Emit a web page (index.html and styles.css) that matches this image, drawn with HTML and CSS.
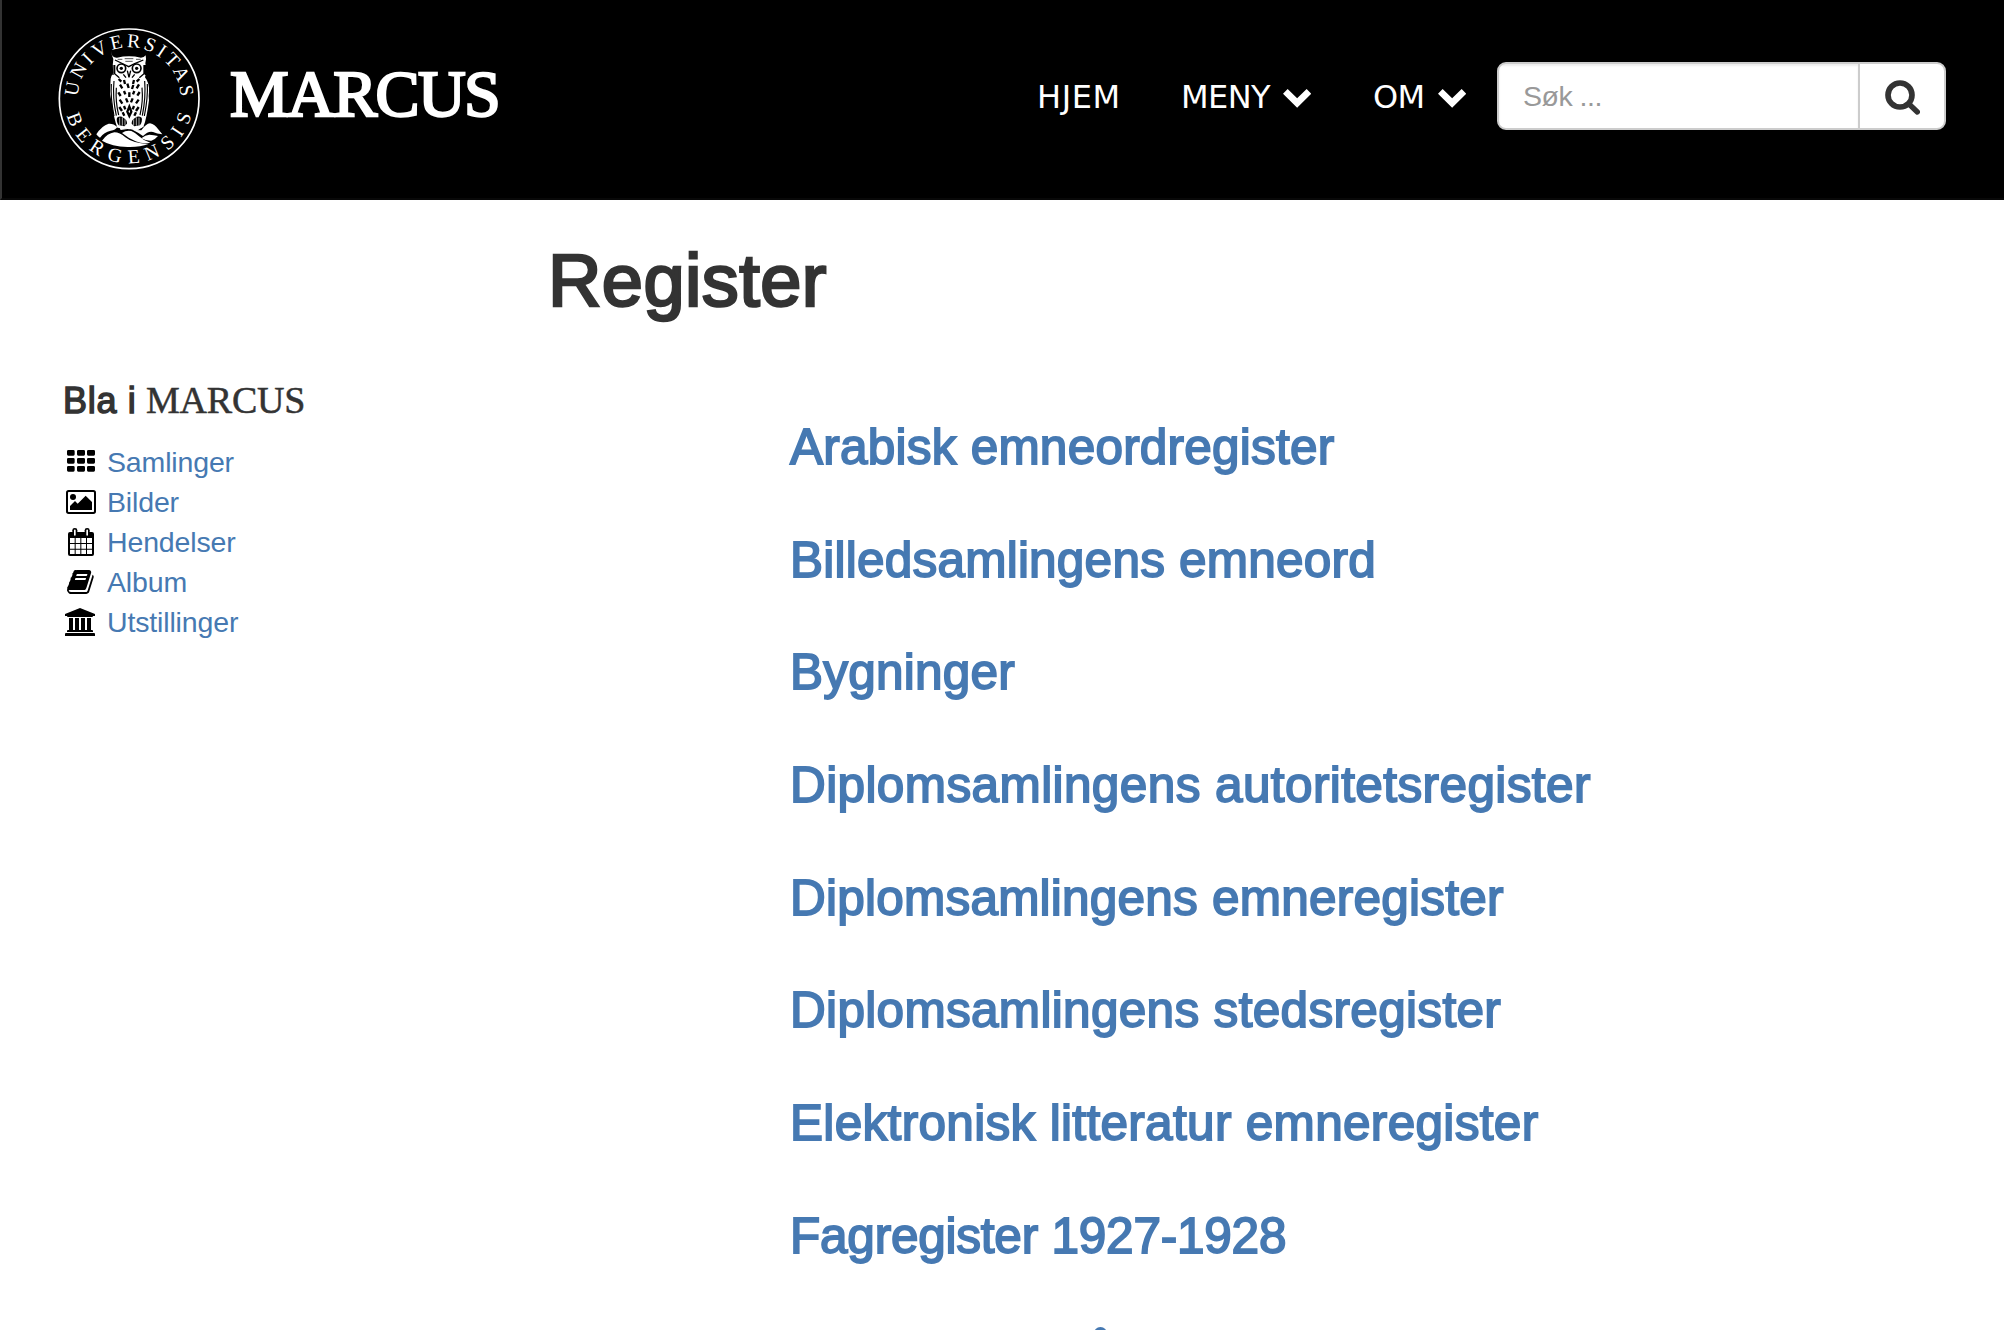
FILE: index.html
```html
<!DOCTYPE html>
<html lang="no">
<head>
<meta charset="utf-8">
<title>Register - Marcus</title>
<link rel="stylesheet" href="styles.css">
</head>
<body>
<header class="topbar">
  <a class="brand">
    <svg class="seal" viewBox="0 0 540 510">
      <defs>
        <path id="arc-top" d="M113 251.500a154.500 154.500 0 0 1 309 0"/>
        <path id="arc-bottom" d="M74 251.500a193.500 193.500 0 0 0 387 0"/>
      </defs>
      <circle cx="267.500" cy="251.500" r="209.500" fill="none" stroke="#fff" stroke-width="5"/>
      <g class="seal-text">
        <text><textPath href="#arc-top" startOffset="6" textLength="473">UNIVERSITAS</textPath></text>
        <text><textPath href="#arc-bottom" startOffset="50" textLength="508">BERGENSIS</textPath></text>
      </g>
      <g fill="#fff">
        <path d="M169 358q16-26 37-32 15-1 26 10-5 9-20 11-20 4-32 21-6-3-11-10z"/>
        <path d="M186 377q16-22 37-25 16 0 33 15 22 18 69 20-25 10-62 9-48-1-77-19z"/>
        <path d="M246 354q12-9 28-6 12 5 25 17 14 13 32 18-22 5-44-4-20-8-41-25z"/>
        <path d="M304 370q12-11 24-11 14 1 26 4-8 10-20 14-16 1-30-7z"/>
        <path d="M304 346q14-20 26-21 15 4 24 17l13 16q-16-2-28-7-14-4-30 12-14-10-30-18z"/>
        <path d="M236 333q32 18 66-3l10 4-22 14-22-7-26 4z"/>
        <path d="M216 121q5 8 15 7 36-8 72 0 9 0 14-7 3 12-1 24 5 22-1 42 14 17 12 45-2 12 0 24-7 55-16 77l-6 5-37 5-36-5q-10-26-16-72l-6-28q0-20 2-47 1-8 8-18-4-20 0-41-7-11-4-24z"/>
      </g>
      <g fill="none" stroke="#000" stroke-width="4">
        <circle cx="244" cy="160" r="13" stroke-width="5"/><circle cx="290" cy="160" r="13" stroke-width="5"/>
        <path d="M225 135l25 12 16 8 18-9 26-11M224 150v26l14 12M312 150v26l-14 12M219 150v30M316 150v30M262 167l5 20 5-20M250 178l8 10M284 178l-8 10" stroke-width="4"/>
        <path d="M214 207q-3 40 8 96M222 198q-5 48 7 104M229 218q-3 42 7 82M322 207q2 42-9 96M314 198q4 48-7 104M306 218q4 42-6 82" stroke-width="3.500"/>
        <path d="M236 192l8 8M252 195l3 12M282 195l-3 12M298 192l-8 8M240 209l7 11M262 206l4 13M280 210l-4 12M297 208l-7 12M235 232l7 11M252 228l4 10M268 232v14M283 228l-4 10M299 231l-7 11M239 254l8 12M258 250l5 12M278 250l-5 12M296 254l-8 11M238 276l8 12M252 273l4 10M282 273l-4 10M296 276l-8 12M268 275l-6 15 6 13 6-13zM248 292l5 10M288 292l-5 10" stroke-width="7"/>
      </g>
      <g fill="#000">
        <circle cx="244" cy="160" r="5"/><circle cx="290" cy="160" r="5"/>
        <path d="M231 308q10-7 19 0 12 6 11 18l-8 8-17-3q-8-12-5-23zM305 308q-10-7-19 0-12 6-11 18l8 8 17-3q8-12 5-23z"/>
      </g>
      <path d="M239 308v24M247 307v25M255 313v18M281 313v18M289 307v25M297 308v24" stroke="#fff" stroke-width="2"/>
      <path d="M233 133h14M254 131h26M288 133h14M256 139h22" stroke="#000" stroke-width="2"/>
    </svg>
    <span class="wordmark">MARCUS</span>
  </a>
  <nav class="menu">
    <a class="m1">HJEM</a>
    <a class="m2">MENY <svg class="chev" viewBox="0 0 85 56"><path d="M0 14L14 0l28.500 28L71 0l14 14-42.500 42z"/></svg></a>
    <a class="m3">OM <svg class="chev" viewBox="0 0 85 56"><path d="M0 14L14 0l28.500 28L71 0l14 14-42.500 42z"/></svg></a>
  </nav>
  <form class="search">
    <span class="field">Søk ...</span>
    <span class="go"><svg viewBox="0 0 105 105"><circle cx="45" cy="45" r="36" fill="none" stroke="#333" stroke-width="17"/><path d="M72 72l25 24" stroke="#333" stroke-width="16" stroke-linecap="round"/></svg></span>
  </form>
</header>
<h1 class="title"><span>Register</span></h1>
<div class="columns">
  <aside class="side">
    <h4><span class="bla">Bla i</span><span class="fell">MARCUS</span></h4>
    <ul>
      <li><svg viewBox="0 0 96 120"><path d="M10 24h15q4 0 4 4v9q0 4-4 4H10q-4 0-4-4v-9q0-4 4-4zM40 24h16q4 0 4 4v9q0 4-4 4H40q-4 0-4-4v-9q0-4 4-4zM70 24h16q4 0 4 4v9q0 4-4 4H70q-4 0-4-4v-9q0-4 4-4zM10 48h15q4 0 4 4v9q0 4-4 4H10q-4 0-4-4v-9q0-4 4-4zM40 48h16q4 0 4 4v9q0 4-4 4H40q-4 0-4-4v-9q0-4 4-4zM70 48h16q4 0 4 4v9q0 4-4 4H70q-4 0-4-4v-9q0-4 4-4zM10 72h15q4 0 4 4v9q0 4-4 4H10q-4 0-4-4v-9q0-4 4-4zM40 72h16q4 0 4 4v9q0 4-4 4H40q-4 0-4-4v-9q0-4 4-4zM70 72h16q4 0 4 4v9q0 4-4 4H70q-4 0-4-4v-9q0-4 4-4z"/></svg><a>Samlinger</a></li>
      <li><svg viewBox="0 0 96 120"><rect x="6" y="27" width="84" height="66" rx="5" fill="none" stroke="#000" stroke-width="6"/><circle cx="24" cy="45" r="9"/><path d="M15 84V72l15-15 8 8 24-24 19 19v24z"/></svg><a>Bilder</a></li>
      <li><svg viewBox="0 0 96 120"><path d="M15 30h66q6 0 6 6v60q0 6-6 6H15q-6 0-6-6V36q0-6 6-6z"/><path fill="#fff" d="M15 48h14v15H15zM32 48h14v15H32zM49 48h14v15H49zM66 48h15v15H66zM15 66h14v14H15zM32 66h14v14H32zM49 66h14v14H49zM66 66h15v14H66zM15 83h14v13H15zM32 83h14v13H32zM49 83h14v13H49zM66 83h15v13H66z"/><rect x="22" y="18" width="15" height="27" rx="7"/><rect x="59" y="18" width="15" height="27" rx="7"/><path d="M29.500 25v14M66.500 25v14" stroke="#fff" stroke-width="5" stroke-linecap="round"/></svg><a>Hendelser</a></li>
      <li><svg viewBox="0 0 96 120"><path transform="translate(6 18) scale(.0482 .0469)" d="M1639 478q40 57 18 129l-275 906q-19 64-76.500 107.500t-122.500 43.500h-923q-77 0-148.500-53.500t-99.500-131.500q-24-67-2-127 0-4 3-27t4-37q1-8-3-21.500t-3-19.500q2-11 8-21t16.500-23.500 16.500-23.500q23-38 45-91.500t30-91.500q3-10 .5-30t-.5-28q3-11 17-28t17-23q21-36 42-92t25-90q1-9-2.500-32t.5-28q4-13 22-30.500t22-22.500q19-26 42.500-84.500t27.500-96.500q1-8-3-25.500t-2-26.500q2-8 9-18t18-23 17-21q8-12 16.500-30.500t15-35 16-36 19.500-32 26.500-23.500 36-11.500 47.500 5.500l-1 3q38-9 51-9h761q74 0 114 56t18 130l-274 906q-36 119-71.500 153.500t-128.500 34.500h-869q-27 0-38 15-11 16-1 43 24 70 144 70h923q29 0 56-15.500t35-41.500l300-987q7-22 5-57 38 15 59 43zm-1064 2q-4 13 2 22.500t20 9.500h608q13 0 25.500-9.500t16.500-22.500l21-64q4-13-2-22.500t-20-9.500h-608q-13 0-25.500 9.500t-16.500 22.500zm-83 256q-4 13 2 22.500t20 9.500h608q13 0 25.500-9.500t16.500-22.500l21-64q4-13-2-22.500t-20-9.500h-608q-13 0-25.500 9.500t-16.500 22.500z"/></svg><a>Album</a></li>
      <li><svg viewBox="0 0 96 120"><path d="M45 18l45 18v6h-6q0 3-3 3H9q-3 0-3-3H0v-6zM12 48h12v36h6V48h12v36h6V48h12v36h6V48h12v36h3q3 0 3 3v3H6v-3q0-3 3-3h3zM3 93h84q3 0 3 3v6H0v-6q0-3 3-3z"/></svg><a>Utstillinger</a></li>
    </ul>
  </aside>
  <main class="registers">
    <h3><a class="r1">Arabisk emneordregister</a></h3>
    <h3><a class="r2">Billedsamlingens emneord</a></h3>
    <h3><a class="r3">Bygninger</a></h3>
    <h3><a class="r4">Diplomsamlingens autoritetsregister</a></h3>
    <h3><a class="r5">Diplomsamlingens emneregister</a></h3>
    <h3><a class="r6">Diplomsamlingens stedsregister</a></h3>
    <h3><a class="r7">Elektronisk litteratur emneregister</a></h3>
    <h3><a class="r8">Fagregister 1927-1928</a></h3>
    <h3><a class="r9">å</a></h3>
  </main>
</div>
</body>
</html>
```
FILE: styles.css
```css
* { box-sizing: border-box; }
html, body { height: 100%; overflow: hidden; }
body { margin: 0; background: #fff; color: #333; font-family: "Liberation Sans", Arial, sans-serif; }
h1, h3, h4, ul { margin: 0; padding: 0; font-weight: 400; }
ul { list-style: none; }

.topbar { display: flex; height: 200px; background: #000; border-left: 2px solid #333; border-bottom: 2px solid #080808; color: #fff; }
.brand { display: flex; padding: 15px 0 0 38px; }
.seal { width: 180px; height: 170px; }
.seal-text { fill: #fff; font: 59px "Liberation Serif", serif; }
.wordmark { margin: 39px 0 0 10px; width: 290px; font: 66px/80px "Liberation Serif", serif; letter-spacing: -1.600px; -webkit-text-stroke: 2.400px #fff; }

.menu { display: flex; margin-left: auto; font: 32px/40px "DejaVu Sans", sans-serif; padding-top: 77px; white-space: nowrap; }
.menu a { display: block; }
.m1 { width: 144px; letter-spacing: .6px; }
.m2 { width: 192px; letter-spacing: -0.6px; }
.m3 { width: 124px; letter-spacing: -0.6px; }
.chev { width: 28.300px; height: 18.700px; margin-left: 3.500px; fill: #fff; }

.search { display: flex; width: 449px; height: 68px; margin: 62px 58px 0 0; border: 2px solid #ccc; border-radius: 9px; background: #fff; overflow: hidden; }
.field { flex: 1; padding-left: 24px; color: #999; font-size: 28.500px; letter-spacing: -0.5px; line-height: 65px; box-shadow: inset 0 2px 2px rgba(0,0,0,.075); }
.go { width: 86px; border-left: 2px solid #ccc; padding: 16px 0 0 25px; }
.go svg { display: block; width: 35px; height: 35px; }

.title { padding: 38px 0 0 548px; height: 178px; font-size: 74px; line-height: 85px; letter-spacing: .4px; -webkit-text-stroke: 2.600px #333; }
.columns { display: flex; }
.side { width: 790px; padding: 0 0 0 62px; }
.side h4 { display: flex; height: 64px; line-height: 46px; white-space: nowrap; }
.bla { width: 84px; padding-left: 1px; font-size: 36px; letter-spacing: .7px; -webkit-text-stroke: 1.400px #333; }
.fell { font: 38px/44px "Liberation Serif", serif; letter-spacing: -0.2px; -webkit-text-stroke: .5px #333; }
.side li { display: flex; height: 40px; padding-left: 3px; font-size: 28.500px; line-height: 40px; letter-spacing: -0.15px; }
.side li svg { width: 32px; height: 40px; margin-right: 10px; }
a { color: inherit; }
.side li a, .registers a { color: #4679b2; }
.registers { padding-top: 41px; white-space: nowrap; }
.registers h3 { height: 112.700px; font-size: 49.500px; line-height: 56px; }
.registers a { letter-spacing: .23px; -webkit-text-stroke: 1.800px #4679b2; }
.registers .r4 { letter-spacing: .4px; }
.registers .r6, .registers .r7 { letter-spacing: .32px; }
.registers .r8 { letter-spacing: -0.22px; }
.registers .r9 { display: block; padding: 3px 0 0 297px; }
```
